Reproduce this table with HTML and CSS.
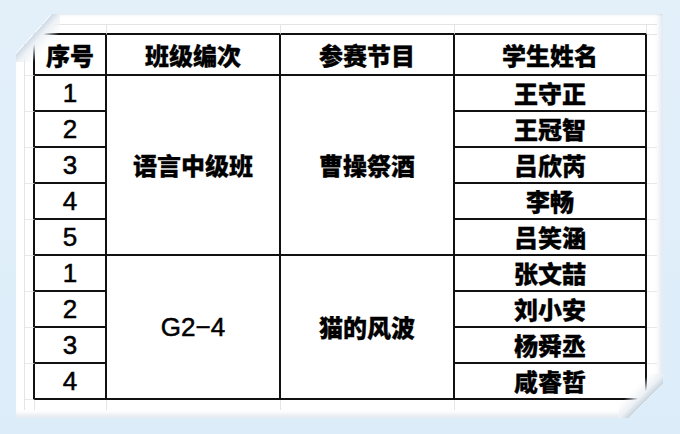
FILE: index.html
```html
<!DOCTYPE html>
<html lang="zh-CN">
<head>
<meta charset="utf-8">
<title>参赛节目</title>
<link rel="stylesheet" href="styles.css">
</head>
<body>
<div class="stage">
  <div class="card">
    <table class="sheet">
      <colgroup>
        <col class="c-ghost"><col class="c-no"><col class="c-class"><col class="c-show"><col class="c-name"><col class="c-ghost">
      </colgroup>
      <tr class="r-top">
        <td class="g-corner"></td><td class="g-top"></td><td class="g-top"></td><td class="g-top"></td><td class="g-top"></td><td class="g-end"></td>
      </tr>
      <tr class="r-head">
        <td class="g-left"></td><th class="cell">序号</th><th class="cell">班级编次</th><th class="cell">参赛节目</th><th class="cell">学生姓名</th><td class="g-right"></td>
      </tr>
      <tr class="r-data">
        <td class="g-left"></td><td class="cell num">1</td><td class="cell zh" rowspan="5">语言中级班</td><td class="cell zh" rowspan="5">曹操祭酒</td><td class="cell zh">王守正</td><td class="g-right"></td>
      </tr>
      <tr class="r-data">
        <td class="g-left"></td><td class="cell num">2</td><td class="cell zh">王冠智</td><td class="g-right"></td>
      </tr>
      <tr class="r-data">
        <td class="g-left"></td><td class="cell num">3</td><td class="cell zh">吕欣芮</td><td class="g-right"></td>
      </tr>
      <tr class="r-data">
        <td class="g-left"></td><td class="cell num">4</td><td class="cell zh">李畅</td><td class="g-right"></td>
      </tr>
      <tr class="r-data">
        <td class="g-left"></td><td class="cell num">5</td><td class="cell zh">吕笑涵</td><td class="g-right"></td>
      </tr>
      <tr class="r-data">
        <td class="g-left"></td><td class="cell num">1</td><td class="cell num" rowspan="4">G2−4</td><td class="cell zh" rowspan="4">猫的风波</td><td class="cell zh">张文喆</td><td class="g-right"></td>
      </tr>
      <tr class="r-data">
        <td class="g-left"></td><td class="cell num">2</td><td class="cell zh">刘小安</td><td class="g-right"></td>
      </tr>
      <tr class="r-data">
        <td class="g-left"></td><td class="cell num">3</td><td class="cell zh">杨舜丞</td><td class="g-right"></td>
      </tr>
      <tr class="r-data">
        <td class="g-left"></td><td class="cell num">4</td><td class="cell zh">咸睿哲</td><td class="g-right"></td>
      </tr>
      <tr class="r-bottom">
        <td class="g-bl"></td><td class="g-bottom"></td><td class="g-bottom"></td><td class="g-bottom"></td><td class="g-bottom"></td><td class="g-br"></td>
      </tr>
    </table>
  </div>
</div>
</body>
</html>
```

FILE: styles.css
```css
html, body {
  margin: 0;
  padding: 0;
}
body {
  width: 680px;
  height: 434px;
  overflow: hidden;
  background: #dcedf9;
}
.stage {
  width: 680px;
  height: 434px;
  padding: 14px 0 0 16px;
  box-sizing: border-box;
  background: linear-gradient(180deg, #e3f0fa 0%, #dcedf9 100%);
}
.card {
  position: relative;
  width: 647px;
  height: 404px;
  box-sizing: border-box;
  padding: 10px 0 0 8px;
  background: #ffffff;
  clip-path: polygon(35px 0, 100% 0, 100% calc(100% - 34px), calc(100% - 34px) 100%, 0 100%, 0 39px);
  box-shadow: inset -7px -7px 5px -3px rgba(160, 180, 200, 0.28), inset 0 2px 2px -1px rgba(160, 180, 200, 0.3);
}
.card::before {
  content: "";
  position: absolute;
  left: 0;
  top: 0;
  width: 44px;
  height: 48px;
  background: linear-gradient(132deg, transparent 41%, #cfdbe6 42%, #eef2f6 52%, rgba(255,255,255,0) 70%);
}
.card::after {
  content: "";
  position: absolute;
  right: 0;
  bottom: 0;
  width: 44px;
  height: 44px;
  background: linear-gradient(315deg, transparent 38.5%, #c9d5df 39.5%, #edf1f5 50%, rgba(255,255,255,0) 66%);
}
.sheet {
  table-layout: fixed;
  border-collapse: separate;
  border-spacing: 0;
  width: 632px;
  border-top: 1px solid #e4e4e4;
  border-left: 1px solid #e4e4e4;
  font-family: "Noto Sans CJK SC", "Liberation Sans", sans-serif;
  color: #000;
}
.c-ghost { width: 10px; }
.c-no { width: 72px; }
.c-class { width: 174px; }
.c-show { width: 174px; }
.c-name { width: 192px; }

.sheet td, .sheet th {
  padding: 0;
  box-sizing: border-box;
}
.r-top td { height: 10px; }
.r-head th, .r-head td { height: 41px; }
.r-data td { height: 36px; }
.r-bottom td { height: 10px; }

.g-corner, .g-end {
  border-right: 1px solid #e4e4e4;
  border-bottom: 1px solid #e4e4e4;
}
.g-end { border-right: 0; }
.g-top {
  border-right: 1px solid #e4e4e4;
  border-bottom: 2px solid #111;
}
.g-left {
  border-right: 2px solid #111;
  border-bottom: 1px solid #e8e8e8;
}
.g-right {
  border-bottom: 1px solid #e8e8e8;
}
.g-bl, .g-bottom {
  border-right: 1px solid #e6e6e6;
}
.g-br { }

.cell {
  border-right: 2px solid #111;
  border-bottom: 2px solid #111;
  text-align: center;
  vertical-align: middle;
}
.r-head th {
  font-size: 24px;
  font-weight: 900;
  line-height: 30px;
  -webkit-text-stroke: 0.3px #000;
}
.zh {
  font-size: 24px;
  font-weight: 900;
  line-height: 30px;
  -webkit-text-stroke: 0.3px #000;
}
.num {
  font-family: "Liberation Sans", Arial, sans-serif;
  font-size: 26px;
  font-weight: 400;
  line-height: 30px;
  -webkit-text-stroke: 0.5px #000;
}
```
